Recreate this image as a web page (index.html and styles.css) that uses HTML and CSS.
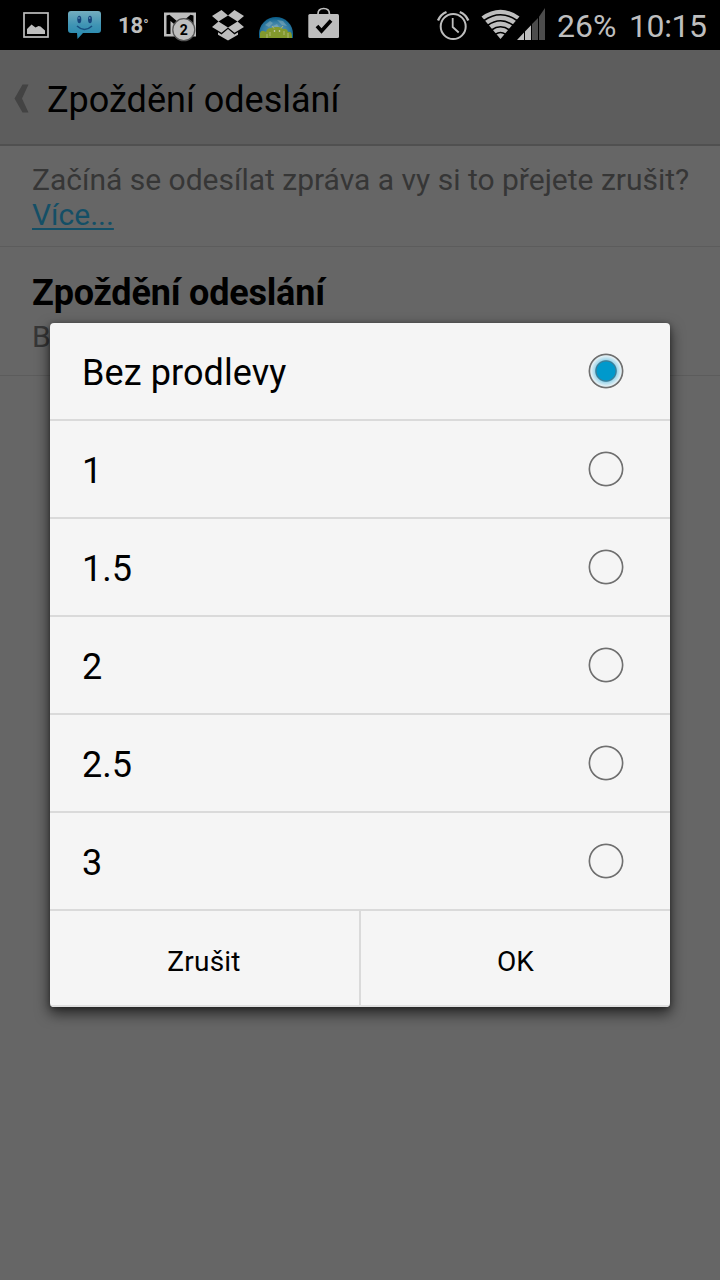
FILE: index.html
```html
<!DOCTYPE html>
<html lang="cs">
<head>
<meta charset="utf-8">
<title>Zpoždění odeslání</title>
<link rel="stylesheet" href="styles.css">
</head>
<body>
<div class="screen">
  <header class="status">
    <div class="status-left">
      <svg class="ic-image" width="32" height="50" viewBox="20 0 32 50"><rect x="24" y="13" width="24" height="24" fill="none" stroke="#bebebe" stroke-width="1.700"/><path d="M27 34v-5l4.500-4.500 4 3 3-1.500 2 .5 4.500 4v3.500z" fill="#bebebe"/></svg>
      <svg class="ic-chat" width="36" height="50" viewBox="67 0 36 50">
        <defs><linearGradient id="chat" x1="0" y1="0" x2="0" y2="1"><stop offset="0" stop-color="#74adbf"/><stop offset=".5" stop-color="#3f94b4"/><stop offset="1" stop-color="#2387ad"/></linearGradient></defs>
        <path d="M71 11h27q3 0 3 3v16q0 3-3 3H83l-5.500 6-.5-6h-6q-3 0-3-3V14q0-3 3-3z" fill="url(#chat)"/>
        <ellipse cx="79.300" cy="19.500" rx="2" ry="3.700" fill="#16467d"/><ellipse cx="90" cy="19.500" rx="2" ry="3.700" fill="#16467d"/>
        <circle cx="79" cy="18" r=".8" fill="#7fa6c8"/><circle cx="89.700" cy="18" r=".8" fill="#7fa6c8"/>
        <path d="M77 26q7.500 7 15 0" fill="none" stroke="#184f80" stroke-width="1.500"/>
      </svg>
      <span class="temp">18<span class="deg">°</span></span>
      <svg class="ic-mail" width="36" height="50" viewBox="162 0 36 50">
        <rect x="164" y="12.500" width="32" height="24" fill="#bebebe"/>
        <path d="M166.500 34V15.500l3-.8 10.500 9 10.500-9 3 .8V34h-3.500V21L180 29l-9.500-8v13z" fill="#000"/>
        <circle cx="183.800" cy="29.700" r="11" fill="#bebebe" stroke="#555" stroke-width="1.300"/>
        <text class="badge-count" x="183.800" y="34.500" text-anchor="middle">2</text>
      </svg>
      <svg class="ic-box" width="36" height="50" viewBox="210 0 36 50"><g fill="#bebebe"><path d="M221.500 10l6.500 5.500-9.500 6-6.500-5.500zM234.500 10l9.500 6-6.500 5.500-9.500-6zM212 27l6.500-5.500 9.500 6-6.500 5.200zM244 27l-6.500-5.500-9.500 6 6.500 5.200z"/><path d="M228 29l6.500 5.400 3.500-2.200v2.500L228 40.500l-10-5.800v-2.500l3.500 2.200z"/></g></svg>
      <svg class="ic-globe" width="38" height="50" viewBox="257 0 38 50">
        <defs><radialGradient id="globe" cx=".5" cy=".6" r=".6"><stop offset="0" stop-color="#6f9eb3"/><stop offset=".6" stop-color="#347da4"/><stop offset="1" stop-color="#075b87"/></radialGradient></defs>
        <path d="M259 38v-4a17 17 0 0 1 34 0v4z" fill="url(#globe)"/>
        <path d="M265 25l5-4 3 2-4 4zM277 20l6 1 4 5-5-1zM273 26l4-2 2 3-5 2z" fill="#9ab8bf" opacity=".45"/>
        <path d="M260 38v-5q1-3 4-2l2 1q1-4 5-4h1q0-1 4-1h2q3 0 5 2 4-1 5 3 4-1 4 5v1z" fill="#83992d"/>
        <path d="M267 38v-4M288 38v-5M270 32v4M284 31v4M272 26l2 2.500M283 26l-2 2.500" fill="none" stroke="#b0b978" stroke-width="1"/>
        <circle cx="274.500" cy="31" r=".8" fill="#ddd"/><circle cx="279.500" cy="31" r=".8" fill="#ddd"/>
      </svg>
      <svg class="ic-bag" width="36" height="50" viewBox="306 0 36 50"><rect x="308.300" y="14" width="30.700" height="24" rx="1.500" fill="#bebebe"/><path d="M318 15v-1q0-5.500 5.700-5.500t5.700 5.500v1" fill="none" stroke="#bebebe" stroke-width="1.700"/><path d="M317 26l4.500 5L331 20.500" fill="none" stroke="#000" stroke-width="3.700"/></svg>
    </div>
    <div class="status-right">
      <svg width="36" height="50" viewBox="435 0 36 50"><g fill="none" stroke="#bebebe"><circle cx="453.200" cy="26.500" r="12.500" stroke-width="2"/><path d="M452.700 18v9l6 5.500" stroke-width="1.800"/><path d="M438 20.500q2.500-6 8.500-8.500M468.300 20.500q-2.500-6-8.500-8.500" stroke-width="2.400"/></g></svg>
      <svg class="ic-signal" width="66" height="50" viewBox="481 0 66 50">
        <path d="M481.500 16.500Q500.500 3 519.500 16.500L500.500 39z" fill="#bebebe"/>
        <g fill="none" stroke="#000" stroke-width="1.600"><path d="M484 20.500q16.500-11.500 33 0M487.500 25.500q13-9.500 26 0M491.500 30q9-6.500 18 0M495.500 34.200q5-3.500 10 0"/></g>
        <path d="M517 40l7-7.500V40zM525 40v-8.500l6-6.300V40z" fill="#bebebe"/><path d="M532 40V24l6-6v22zM539 40V16.800l6-8.800v32z" fill="#4c4c4c"/>
      </svg>
      <span class="battery">26%</span>
      <span class="clock">10:15</span>
    </div>
  </header>

  <div class="action-bar">
    <svg class="back" width="16" height="30" viewBox="0 0 16 30"><path d="M8.500 .5H14.500L8 14.500 14.500 28.500H8.500L.5 14.500z" fill="#434343"/></svg>
    <h1 class="title">Zpoždění odeslání</h1>
  </div>
  <main class="prefs">
    <section class="info">Začíná se odesílat zpráva a vy si to přejete zrušit?<br><a class="more">Více...</a></section>
    <section class="pref">
      <h2 class="pref-title">Zpoždění odeslání</h2>
      <p class="pref-summary">Bez prodlevy</p>
    </section>
  </main>

  <div class="dialog">
    <ul class="options">
      <li class="option"><span class="label-first">Bez prodlevy</span><i class="radio checked"></i></li>
      <li class="option"><span>1</span><i class="radio"></i></li>
      <li class="option"><span>1.5</span><i class="radio"></i></li>
      <li class="option"><span>2</span><i class="radio"></i></li>
      <li class="option"><span>2.5</span><i class="radio"></i></li>
      <li class="option"><span>3</span><i class="radio"></i></li>
    </ul>
    <div class="actions">
      <button class="action">Zrušit</button>
      <button class="action">OK</button>
    </div>
  </div>
</div>
</body>
</html>
```
FILE: styles.css
```css
* { box-sizing: border-box; margin: 0; padding: 0; }
body { font-family: Roboto, "Noto Sans", sans-serif; background: #666; }
svg { display: block; flex: none; }
.screen { position: relative; width: 720px; height: 1280px; overflow: hidden; background: #666; }
.status { display: flex; justify-content: space-between; height: 50px; padding: 0 12px 0 20px; background: #000; color: #bebebe; }
.status-left, .status-right { display: flex; }
.ic-chat { margin-left: 15px; }
.temp { width: 44px; margin-left: 15px; font-size: 22px; font-weight: 700; line-height: 52px; white-space: nowrap; }
.deg { font-size: 14px; vertical-align: 3px; line-height: 1; }
.ic-box { margin-left: 12px; }
.ic-globe, .ic-bag { margin-left: 11px; }
.badge-count { font-size: 14px; font-weight: 700; fill: #000; }
.ic-signal { margin-left: 10px; }
.battery, .clock { font-size: 32px; line-height: 52px; white-space: nowrap; }
.battery { width: 72px; margin-left: 10px; }
.clock { width: 79px; letter-spacing: -0.4px; }

.action-bar { display: flex; height: 96px; padding-left: 14px; background: #5d5d5d; border-bottom: 2px solid #505050; }
.back { margin-top: 34px; }
.title { margin-left: 17px; font-size: 36px; font-weight: 400; line-height: 100px; color: #000; }
.info { height: 101px; padding: 16px 0 0 32px; font-size: 30px; line-height: 35px; color: #363636; border-bottom: 1px solid #5c5c5c; white-space: nowrap; }
.more { color: #144f66; text-decoration: underline; text-decoration-thickness: 2px; text-underline-offset: 3px; }
.pref { height: 129px; padding: 25px 32px 0; border-bottom: 1px solid #5c5c5c; }
.pref-title { font-size: 36px; font-weight: 700; line-height: 43px; letter-spacing: -0.2px; }
.pref-summary { margin-top: 4px; font-size: 30px; line-height: 36px; color: #363636; }

.dialog { position: absolute; left: 50px; top: 323px; width: 620px; height: 684px; border-radius: 4px; background: #f5f5f5; box-shadow: 0 6px 14px 1px rgba(0,0,0,.6), 0 1px 5px rgba(0,0,0,.3); overflow: hidden; }
.options { list-style: none; }
.option { display: flex; align-items: center; justify-content: space-between; height: 98px; padding: 0 46px 0 32px; border-bottom: 2px solid #dadada; font-size: 36px; }
.option span { padding-top: 4px; line-height: 92px; }
.label-first { letter-spacing: 0.1px; }
.radio { width: 36px; height: 36px; border: 1.5px solid transparent; border-radius: 50%; background: radial-gradient(circle, transparent 15.3px, #707070 16.200px 17px, transparent 17.900px) border-box; }
.checked { background: radial-gradient(circle, #0099cc 0 9px, #3a7f9a 9.800px 10.300px, #a2d8ec 11.300px, #e6f1f5 15.300px, #707070 16.200px 17px, transparent 17.900px) border-box; }
.actions { display: flex; height: 96px; border-bottom: 2px solid #dfdfdf; }
.action { flex: 1; border: 0; background: none; font: 400 28px/96px Roboto, "Noto Sans", sans-serif; color: #000; padding-top: 3px; }
.action:first-child { border-right: 2px solid #dadada; flex: 0 0 311px; letter-spacing: 0.2px; padding-right: 1px; }
```
